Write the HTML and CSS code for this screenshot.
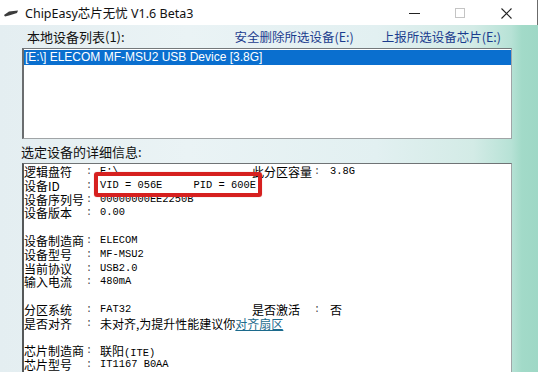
FILE: index.html
```html
<!DOCTYPE html>
<html lang="zh">
<head>
<meta charset="utf-8">
<title>ChipEasy芯片无忧 V1.6 Beta3</title>
<link rel="stylesheet" href="styles.css">
</head>
<body>
<div class="window">
  <div class="titlebar">
    <svg class="app-icon" width="16" height="10" viewBox="0 0 16 10">
      <polygon points="1,7 6,3.5 15,2.5 14,5 6,7.5 2,8.5" fill="#3c3c3c"/>
    </svg>
    <span class="title">ChipEasy芯片无忧 V1.6 Beta3</span>
    <div class="controls">
      <svg class="ctl" width="46" height="24" viewBox="0 0 46 24"><line x1="17" y1="12.5" x2="28" y2="12.5" stroke="#222" stroke-width="1"/></svg>
      <svg class="ctl" width="46" height="24" viewBox="0 0 46 24"><rect x="17.5" y="7.5" width="9" height="9" fill="none" stroke="#c4c4c4" stroke-width="1"/></svg>
      <svg class="ctl" width="46" height="24" viewBox="0 0 46 24"><path d="M17.5 7.5 L27.5 17.5 M27.5 7.5 L17.5 17.5" stroke="#222" stroke-width="1.1"/></svg>
    </div>
  </div>
  <div class="main">
    <div class="header-row">
      <span class="section-label">本地设备列表(1):</span>
      <a class="action first">安全删除所选设备(E:)</a>
      <a class="action">上报所选设备芯片(E:)</a>
    </div>
    <div class="listbox">
      <div class="list-item selected">[E:\] ELECOM MF-MSU2 USB Device [3.8G]</div>
    </div>
    <div class="section-label detail-label">选定设备的详细信息:</div>
    <div class="details">
      <div class="row"><span class="k">逻辑盘符</span><span class="c">:</span><span class="v mono">E:\</span><span class="k">此分区容量</span><span class="c">:</span><span class="v mono">3.8G</span></div>
      <div class="row"><span class="k">设备ID</span><span class="c">:</span><span class="v mono wide">VID = 056E&nbsp;&nbsp;&nbsp;&nbsp;&nbsp;PID = 600E</span></div>
      <div class="row"><span class="k">设备序列号</span><span class="c">:</span><span class="v mono wide">00000000EE2250B</span></div>
      <div class="row"><span class="k">设备版本</span><span class="c">:</span><span class="v mono">0.00</span></div>
      <div class="row blank"></div>
      <div class="row"><span class="k">设备制造商</span><span class="c">:</span><span class="v mono">ELECOM</span></div>
      <div class="row"><span class="k">设备型号</span><span class="c">:</span><span class="v mono">MF-MSU2</span></div>
      <div class="row"><span class="k">当前协议</span><span class="c">:</span><span class="v mono">USB2.0</span></div>
      <div class="row"><span class="k">输入电流</span><span class="c">:</span><span class="v mono">480mA</span></div>
      <div class="row blank"></div>
      <div class="row"><span class="k">分区系统</span><span class="c">:</span><span class="v mono">FAT32</span><span class="k">是否激活</span><span class="c">:</span><span class="v">否</span></div>
      <div class="row"><span class="k">是否对齐</span><span class="c">:</span><span class="v wide">未对齐,为提升性能建议你<a class="inline-link">对齐扇区</a></span></div>
      <div class="row blank"></div>
      <div class="row"><span class="k">芯片制造商</span><span class="c">:</span><span class="v">联阳<span class="mono">(ITE)</span></span></div>
      <div class="row"><span class="k">芯片型号</span><span class="c">:</span><span class="v mono wide">IT1167 B0AA</span></div>
      <div class="highlight"></div>
    </div>
  </div>
</div>
</body>
</html>
```

FILE: styles.css
```css
* { box-sizing: border-box; }
html, body {
  margin: 0;
  padding: 0;
  width: 538px;
  height: 372px;
  overflow: hidden;
  font-family: "Noto Sans", "Noto Sans CJK SC", sans-serif;
}
.window {
  width: 538px;
  height: 372px;
  display: flex;
  flex-direction: column;
  overflow: hidden;
}
.titlebar {
  height: 25px;
  flex: none;
  background: #ffffff;
  display: flex;
  align-items: center;
  border-right: 1px solid #6b6b6b;
}
.app-icon {
  margin-left: 3px;
  margin-top: 1px;
}
.title {
  margin-left: 6px;
  font-size: 12.5px;
  color: #111;
}
.controls {
  margin-left: auto;
  display: flex;
  margin-right: 7px;
}
.ctl { display: block; }
.main {
  flex: 1;
  background: linear-gradient(to right, #e4eef1 0%, #eaf3f5 35%, #e2f0f1 70%, #d3ebe6 88%, #b7e2d6 95%, #a2dac8 97%, #9fd8c6 100%);
  padding-left: 22px;
  padding-right: 26px;
}
.header-row {
  height: 23px;
  display: flex;
  align-items: center;
  padding-left: 5px;
  padding-right: 11px;
}
.section-label {
  font-family: "Noto Sans CJK SC", sans-serif;
  font-size: 13px;
  color: #111;
}
.action {
  font-family: "Noto Sans CJK SC", sans-serif;
  font-size: 12.5px;
  color: #1b3c8e;
  margin-left: 28px;
}
.action.first { margin-left: auto; }
.listbox {
  height: 91px;
  background: #fff;
  border: 1px solid #a0a4a6;
  border-top-color: #74787a;
  border-left: 2px solid #6a6d6f;
  padding-top: 1px;
}
.list-item {
  height: 15px;
  line-height: 15px;
  font-family: "Liberation Sans", "Noto Sans", sans-serif;
  font-size: 12px;
  padding-left: 1px;
}
.list-item.selected {
  background: #0a6fcf;
  color: #fff;
}
.detail-label {
  height: 24px;
  display: flex;
  align-items: center;
  padding-top: 1px;
  margin-left: -1px;
}
.details {
  position: relative;
  flex: 1;
  background: #fff;
  border: 1px solid #a0a4a6;
  border-top-color: #6f7375;
  border-left: 2px solid #555859;
  padding-top: 1px;
}
.row {
  display: grid;
  grid-template-columns: 62px 14px 152px 62px 16px 1fr;
  height: 13.8px;
  line-height: 13.8px;
  font-size: 12px;
  color: #000;
  white-space: nowrap;
}
.k, .v {
  font-family: "Noto Sans CJK SC", sans-serif;
}
.c {
  font-family: "Liberation Mono", monospace;
  font-size: 10px;
  color: #444;
}
.mono {
  font-family: "Liberation Mono", "Noto Sans CJK SC", monospace;
  font-size: 10.4px;
}
.wide { grid-column: 3 / 7; }
.inline-link {
  color: #1c6a8c;
  text-decoration: underline;
}
.highlight {
  position: absolute;
  left: 70px;
  top: 8px;
  width: 168px;
  height: 25px;
  border: 4px solid #d6201f;
  border-radius: 3px;
  box-shadow: 0 0 1px rgba(180,0,0,0.5);
}
```
